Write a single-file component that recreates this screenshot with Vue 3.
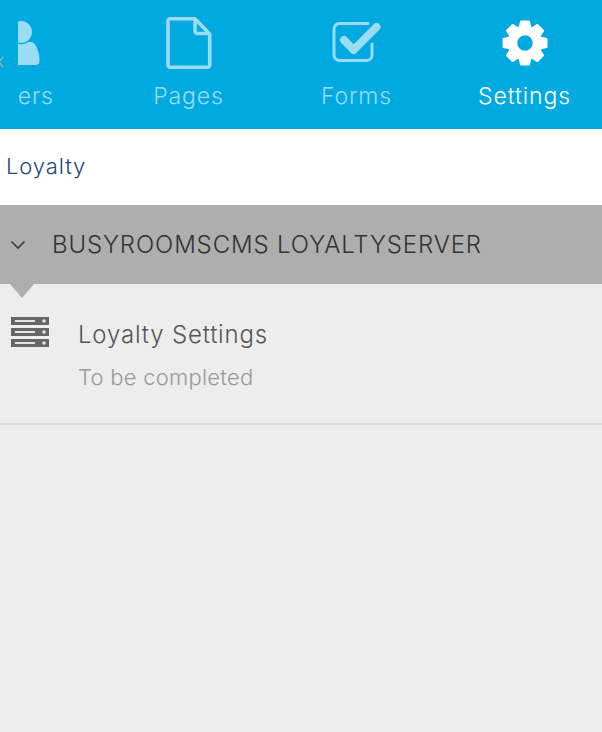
<script setup>
const tabs = [
  { key: 'users', label: 'Users' },
  { key: 'pages', label: 'Pages' },
  { key: 'forms', label: 'Forms' },
  { key: 'settings', label: 'Settings', active: true }
]
const teeth = [0, 45, 90, 135, 180, 225, 270, 315]
</script>

<template>
  <div class="page">
    <header class="topbar">
      <svg class="scroll-hint" width="5" height="12" viewBox="0 0 5 12">
        <path d="M4 1L0 6l4 5" fill="none" stroke="#b0b6b4" stroke-width="1.300"/>
      </svg>
      <nav class="tabs">
        <div class="strip">
          <div v-for="t in tabs" :key="t.key" class="tab" :class="{ active: t.active }">
            <svg class="icon" viewBox="0 0 60 60" width="60" height="60">
              <template v-if="t.key === 'users'">
                <path d="M11.500 48C11.500 40 14 32 19 29H41C46 32 48.500 40 48.500 48a4 4 0 0 1-4 4H15.500a4 4 0 0 1-4-4z" fill="currentColor"/>
                <circle cx="30" cy="19" r="11.600" fill="currentColor" stroke="#00a9e0" stroke-width="1.200"/>
              </template>
              <template v-else-if="t.key === 'pages'">
                <path d="M11 5.800h25L50.700 21v31a2 2 0 0 1-2 2.200H11a2 2 0 0 1-2-2.200V8a2 2 0 0 1 2-2.200z" fill="none" stroke="currentColor" stroke-width="3.600" stroke-linejoin="round"/>
                <path d="M36 6v12a2.500 2.500 0 0 0 2.500 2.500H50" fill="none" stroke="currentColor" stroke-width="3.600" stroke-linejoin="round"/>
              </template>
              <template v-else-if="t.key === 'forms'">
                <path d="M45 31v11a5.500 5.500 0 0 1-5.500 5.500H12.500A5.500 5.500 0 0 1 7 42V16a5.500 5.500 0 0 1 5.500-5.500H41" fill="none" stroke="currentColor" stroke-width="3" stroke-linecap="round"/>
                <path d="M17 27l9.500 10L49.500 14" fill="none" stroke="currentColor" stroke-width="8" stroke-linecap="round" stroke-linejoin="round"/>
              </template>
              <template v-else>
                <circle cx="30" cy="30" r="12.500" fill="none" stroke="currentColor" stroke-width="9.500"/>
                <path
                  v-for="a in teeth"
                  :key="a"
                  :transform="`rotate(${a} 30 30)`"
                  d="M24.500 15L26 8.500H34L35.500 15z"
                  fill="currentColor"
                  stroke="currentColor"
                  stroke-width="2"
                  stroke-linejoin="round"
                />
              </template>
            </svg>
            <span class="label">{{ t.label }}</span>
          </div>
        </div>
      </nav>
    </header>

    <div class="crumb">Loyalty</div>

    <div class="group">
      <svg class="chev" width="16" height="10" viewBox="0 0 16 10">
        <path d="M1.500 1.500L8 8l6.500-6.500" fill="none" stroke="#3b3b3b" stroke-width="1.600"/>
      </svg>
      <span class="group-title">BUSYROOMSCMS LOYALTYSERVER</span>
      <span class="pointer"></span>
    </div>

    <div class="item">
      <svg class="item-icon" width="38" height="30" viewBox="0 0 38 30">
        <g fill="#666">
          <rect x="0" y="0" width="38" height="8"/>
          <rect x="0" y="11" width="38" height="8"/>
          <rect x="0" y="22" width="38" height="8"/>
        </g>
        <g fill="#e4e4e4">
          <rect x="4" y="3" width="20" height="2"/>
          <rect x="4" y="14" width="20" height="2"/>
          <rect x="4" y="25" width="20" height="2"/>
          <circle cx="33" cy="4" r="1.800"/>
          <circle cx="33" cy="15" r="1.800"/>
          <circle cx="33" cy="26" r="1.800"/>
        </g>
      </svg>
      <div class="item-text">
        <div class="item-title">Loyalty Settings</div>
        <div class="item-sub">To be completed</div>
      </div>
    </div>
  </div>
</template>

<style>
html, body { margin: 0; background: #ededed; }
</style>

<style scoped>
.page {
  width: 602px;
  height: 732px;
  overflow: hidden;
  background: #ededed;
  font-family: Inter, "Noto Sans", sans-serif;
}
.topbar {
  position: relative;
  height: 129px;
  background: #00a9e0;
}
.scroll-hint {
  position: absolute;
  left: -1px;
  top: 56px;
}
.tabs {
  height: 129px;
  margin-left: 18px;
  overflow: hidden;
}
.strip {
  display: flex;
  margin-left: -81.5px;
}
.tab {
  flex: 0 0 168px;
  height: 129px;
  display: flex;
  flex-direction: column;
  align-items: center;
  color: #99dcf3;
}
.tab.active { color: #fff; }
.icon {
  margin-top: 13px;
  display: block;
}
.label {
  margin-top: 9px;
  font-size: 23px;
  font-weight: 350;
  line-height: 28px;
  letter-spacing: 0.9px;
}
.crumb {
  height: 76px;
  line-height: 74px;
  padding-left: 6px;
  background: #fff;
  font-size: 22px;
  font-weight: 350;
  letter-spacing: 0.9px;
  color: #23467a;
}
.group {
  position: relative;
  height: 79px;
  background: #aeaeae;
  display: flex;
  align-items: center;
  padding-left: 10px;
}
.chev { flex: none; }
.group-title {
  margin-left: 26px;
  font-size: 24px;
  font-weight: 350;
  letter-spacing: 0.87px;
  color: #333;
}
.pointer {
  position: absolute;
  left: 10px;
  top: 79px;
  border-left: 12px solid transparent;
  border-right: 12px solid transparent;
  border-top: 14px solid #aeaeae;
}
.item {
  display: flex;
  height: 141px;
  box-sizing: border-box;
  padding: 33px 0 0 11px;
  border-bottom: 2px solid #d9d9d9;
}
.item-icon { flex: none; }
.item-text { margin-left: 29px; }
.item-title {
  font-size: 24px;
  font-weight: 350;
  line-height: 28px;
  letter-spacing: 0.82px;
  color: #555;
  margin-top: 4px;
}
.item-sub {
  font-size: 22px;
  font-weight: 350;
  line-height: 26px;
  letter-spacing: 0.25px;
  color: #999;
  margin-top: 15px;
}
</style>
